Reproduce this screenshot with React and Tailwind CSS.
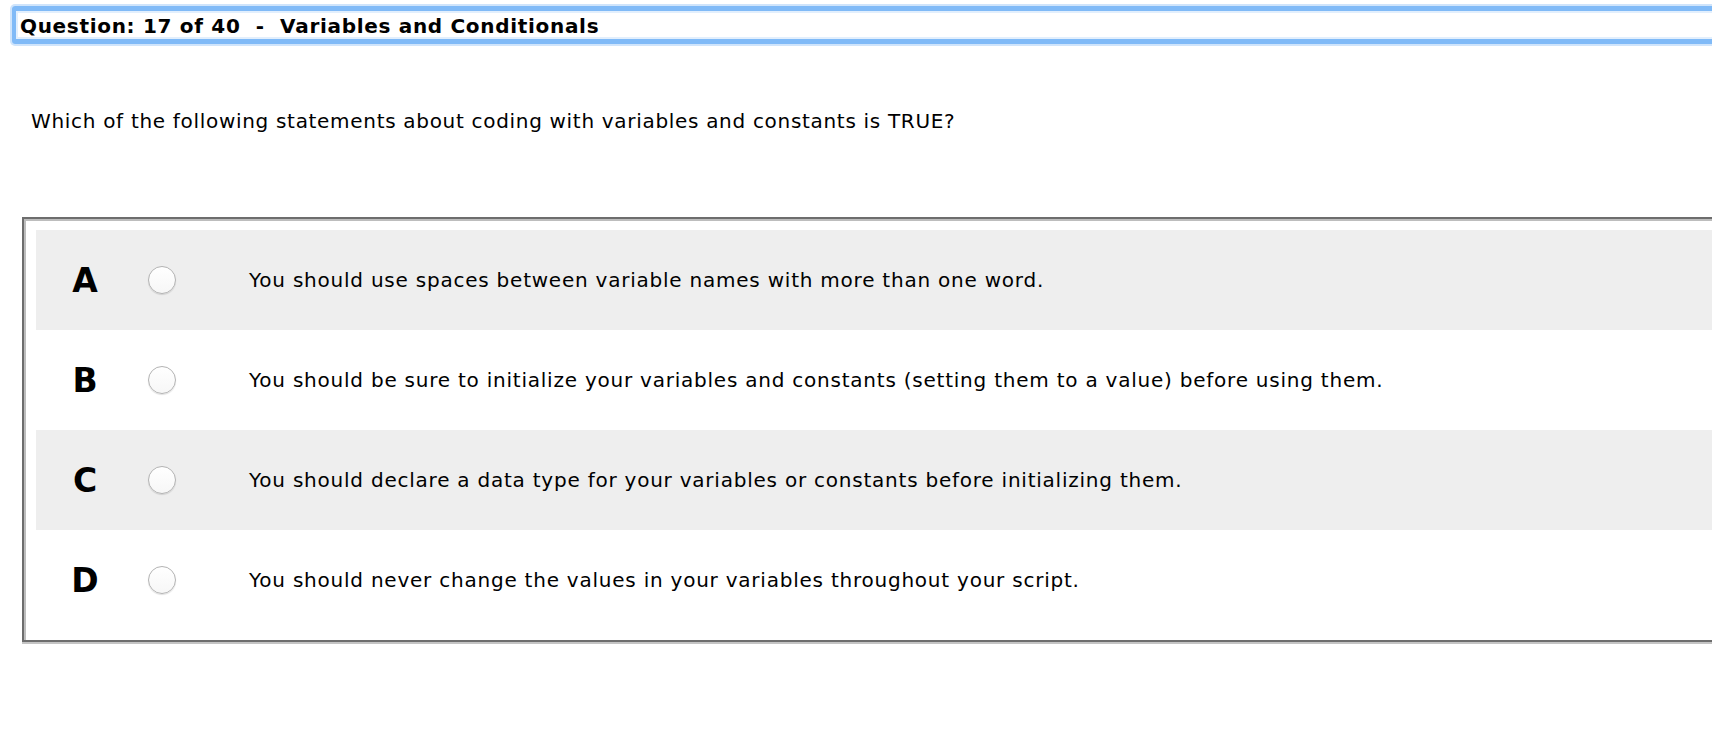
const options = [
  { letter: "A", text: "You should use spaces between variable names with more than one word." },
  { letter: "B", text: "You should be sure to initialize your variables and constants (setting them to a value) before using them." },
  { letter: "C", text: "You should declare a data type for your variables or constants before initializing them." },
  { letter: "D", text: "You should never change the values in your variables throughout your script." },
];

function Radio() {
  return (
    <span className="block w-[28px] h-[28px] rounded-full border border-[#b3b3b3] bg-gradient-to-b from-white to-[#f7f7f7] shadow-[0_1px_1px_rgba(0,0,0,0.12)]" />
  );
}

export default function App() {
  return (
    <div className="w-screen h-screen overflow-hidden bg-white text-black font-['Verdana','DejaVu_Sans',sans-serif]">
      <div className="ml-[12px] mt-[6px] w-[1800px] h-[38px] border-x-[4px] border-y-[5px] border-[#80baf7] rounded-[3px] shadow-[0_0_0_2px_#cfe4fb,inset_0_0_0_2px_#e2effd] flex items-center pl-[4px] pt-[2px]">
        <span className="text-[20px] tracking-[0.69px] font-bold leading-none whitespace-pre">
          Question: 17 of 40  -  Variables and Conditionals
        </span>
      </div>

      <p className="mt-[66px] ml-[31px] text-[20px] tracking-[0.69px] leading-[22px]">
        Which of the following statements about coding with variables and constants is TRUE?
      </p>

      <div className="mt-[85px] ml-[22px] w-[1900px] border-2 border-[#6d6d6d] shadow-[inset_2px_2px_0_#bdbdbd,0_2px_0_#c4c4c4] pt-[11px] pl-[12px] pb-[10px]">
        {options.map((o, i) => (
          <div
            key={o.letter}
            className={`h-[100px] flex items-center ${i % 2 === 0 ? "bg-[#eeeeee]" : "bg-white"}`}
          >
            <span className="w-[98px] text-center text-[33px] font-bold leading-none">{o.letter}</span>
            <span className="ml-[14px]">
              <Radio />
            </span>
            <span className="ml-[73px] text-[20px] tracking-[0.77px] leading-[22px] whitespace-nowrap">{o.text}</span>
          </div>
        ))}
      </div>
    </div>
  );
}
